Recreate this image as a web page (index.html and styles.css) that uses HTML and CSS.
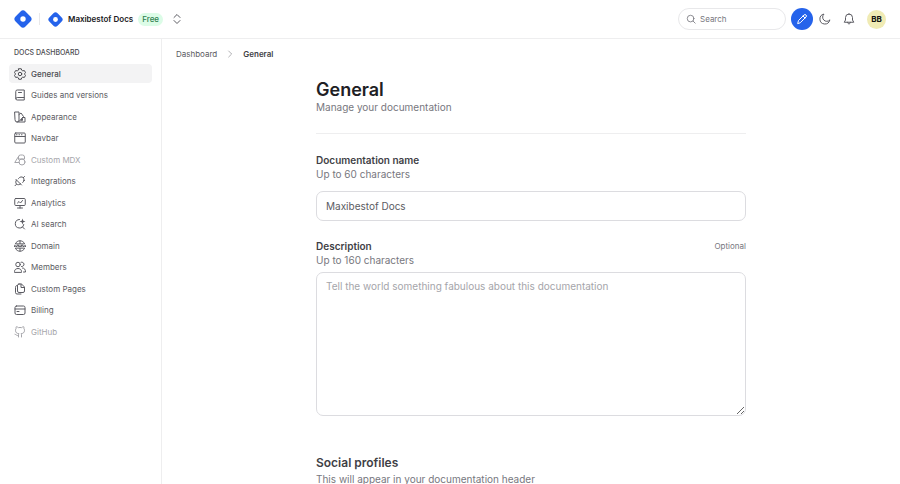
FILE: index.html
```html
<!DOCTYPE html>
<html lang="en">
<head>
<meta charset="utf-8">
<meta name="viewport" content="width=device-width, initial-scale=1">
<title>General</title>
<link rel="stylesheet" href="styles.css">
</head>
<body>
<header class="topbar">
  <a class="brand" href="#" aria-label="Home"><svg class="logo" viewBox="0 0 18 18"><rect x="2" y="2" width="14" height="14" rx="3.500" transform="rotate(45 9 9)"/><circle cx="9" cy="9" r="2.700"/></svg></a>
  <span class="divider"></span>
  <button class="project" type="button">
    <svg class="logo logo-small" viewBox="0 0 18 18"><rect x="2" y="2" width="14" height="14" rx="3.500" transform="rotate(45 9 9)"/><circle cx="9" cy="9" r="2.900"/></svg>
    <span class="project-name">Maxibestof Docs</span>
    <span class="badge">Free</span>
    <svg class="icon" viewBox="0 0 24 24"><path d="m6 9 6-6 6 6M6 15l6 6 6-6"/></svg>
  </button>
  <div class="tools">
    <label class="search">
      <svg class="icon-small" viewBox="0 0 24 24"><circle cx="11" cy="11" r="8"/><path d="m17 17 5 5"/></svg>
      <input type="search" placeholder="Search" aria-label="Search">
    </label>
    <button class="round edit" type="button" aria-label="Edit"><svg class="icon" viewBox="0 0 24 24"><path d="M3.500 20.500 5 15 16 4a2.800 2.800 0 0 1 4 4L9 19zM14 6l4 4"/></svg></button>
    <button class="round" type="button" aria-label="Dark mode"><svg class="icon" viewBox="0 0 24 24"><path d="M21.500 14.500A10 10 0 1 1 10 2.200a8 8 0 0 0 11.500 12.300z"/></svg></button>
    <button class="round" type="button" aria-label="Notifications"><svg class="icon" viewBox="0 0 24 24"><path d="M12 2a7 7 0 0 0-7 7v5l-2.500 4.500h19L19 14V9a7 7 0 0 0-7-7zM9 18.500c0 4.500 6 4.500 6 0"/></svg></button>
    <button class="avatar" type="button">BB</button>
  </div>
</header>
<div class="shell">
  <nav class="sidebar" aria-label="Docs dashboard">
    <h2 class="sidebar-title">DOCS DASHBOARD</h2>
    <ul class="menu">
      <li><a class="item current" href="#"><svg class="icon" viewBox="0 0 24 24"><path d="M9.500 1.500h5l1 3 2 1.200 3.200-.6 2.400 4.200-2.100 2.400v.6l2.100 2.400-2.400 4.200-3.200-.6-2 1.200-1 3h-5l-1-3-2-1.200-3.200.6L.9 14.700 3 12.300v-.6L.9 9.300l2.400-4.200 3.200.6 2-1.200z"/><circle cx="12" cy="12" r="3.500"/></svg>General</a></li>
      <li><a class="item" href="#"><svg class="icon" viewBox="0 0 24 24"><path d="M20.500 17V2H6.500a3 3 0 0 0-3 3v14a3 3 0 0 0 3 3h14v-5h-14a3 3 0 0 0-3 2.500M9 7h6"/></svg>Guides and versions</a></li>
      <li><a class="item" href="#"><svg class="icon" viewBox="0 0 24 24"><path d="M2 2h8v16a4 4 0 0 1-8 0zM10 7l4-3 5 7-9 10M17 13h5v9H6M14 18l3-3v3z"/></svg>Appearance</a></li>
      <li><a class="item" href="#"><svg class="icon" viewBox="0 0 24 24"><rect x="1.500" y="2" width="21" height="20" rx="2"/><path d="M2 9h20M5 5.500h1M10 5.500h1M15 5.500h1"/></svg>Navbar</a></li>
      <li><a class="item muted" href="#"><svg class="icon" viewBox="0 0 24 24"><path d="M9 5 1.500 17H10M9 10V6a4 4 0 0 1 4-4h4a4 4 0 0 1 4 4v4H9z"/><circle cx="16" cy="16" r="6"/></svg>Custom MDX</a></li>
      <li><a class="item" href="#"><svg class="icon" viewBox="0 0 24 24"><path d="M5 10c-2 3-2 6 0 8s6 2 8.500-.5M5 18.500l-3 3M4 9l11 11M9 7c3-4 7-4 9.500-1.500s2 6.500-1 9.500M18.500 5.500 21 3M19 12l2-1"/></svg>Integrations</a></li>
      <li><a class="item" href="#"><svg class="icon" viewBox="0 0 24 24"><rect x="1.500" y="3" width="21" height="14" rx="2"/><path d="M7 22h10M12 17v5M7 12l3-3 3 3 4-5"/></svg>Analytics</a></li>
      <li><a class="item" href="#"><svg class="icon" viewBox="0 0 24 24"><path d="M11 3a8.500 8.500 0 1 0 8.500 10M17 18l4 4"/><path class="solid" d="m17 1 1.600 4.400L23 7l-4.400 1.600L17 13l-1.600-4.400L11 7l4.400-1.600z"/></svg>AI search</a></li>
      <li><a class="item" href="#"><svg class="icon" viewBox="0 0 24 24"><path d="M3 7c3-7.500 15-7.500 18 0zM3 17c3 7.500 15 7.500 18 0zM12 2v5M12 17v5"/><path d="m0 10 1.500 4L3.500 11l2 3L7 10M8.500 10l1.500 4 2-3 2 3 1.500-4M17 10l1.500 4 2-3 2 3 1.500-4"/></svg>Domain</a></li>
      <li><a class="item" href="#"><svg class="icon" viewBox="0 0 24 24"><circle cx="8" cy="7" r="4.500"/><path d="M1 22v-1c0-8 14-8 14 0v1zM14 2.500a4.500 4.500 0 1 1 1 8.700M17 14c4 0 6 3 6 8h-4"/></svg>Members</a></li>
      <li><a class="item" href="#"><svg class="icon" viewBox="0 0 24 24"><path d="M10 2h5l6 6v8a3 3 0 0 1-3 3h-8a3 3 0 0 1-3-3V5a3 3 0 0 1 3-3zM14 2v7h7M7 5c-3 0-4 1-4 4v10a3 3 0 0 0 3 3h8"/></svg>Custom Pages</a></li>
      <li><a class="item" href="#"><svg class="icon" viewBox="0 0 24 24"><rect x="2" y="4" width="20" height="17" rx="3"/><path d="M2 10h20M6 15h4"/></svg>Billing</a></li>
      <li><a class="item muted" href="#"><svg class="icon" viewBox="0 0 24 24"><path d="M9 22v-4c0-1 .3-2 1-2.500-4-.5-7-2-7-7 0-1.500.5-3 1.300-4C4 3.500 4 2.500 4.500 1.500c2 0 3.500 1 4.500 1.800 2-.5 4-.5 6 0 1-.8 2.500-1.800 4.500-1.800.5 1 .5 2 .2 3 .8 1 1.300 2.500 1.300 4 0 5-3 6.500-7 7 .7.500 1 1.500 1 2.500v4M9 19c-4 1-4-2-7-2.500"/></svg>GitHub</a></li>
    </ul>
  </nav>
  <main class="main">
    <nav class="crumbs" aria-label="Breadcrumb">
      <a href="#">Dashboard</a>
      <svg class="chevron" viewBox="0 0 24 24"><path d="m8 3 9 9-9 9"/></svg>
      <a class="here" href="#">General</a>
    </nav>
    <form class="form">
      <header class="heading">
        <h1>General</h1>
        <p class="hint">Manage your documentation</p>
      </header>
      <div class="field">
        <label for="name">Documentation name</label>
        <p class="hint">Up to 60 characters</p>
        <input class="control" id="name" type="text" value="Maxibestof Docs">
      </div>
      <div class="field">
        <div class="label-row"><label for="description">Description</label><span class="optional">Optional</span></div>
        <p class="hint">Up to 160 characters</p>
        <textarea class="control area" id="description" placeholder="Tell the world something fabulous about this documentation"></textarea>
      </div>
      <section class="social">
        <h2>Social profiles</h2>
        <p class="hint">This will appear in your documentation header</p>
      </section>
    </form>
  </main>
</div>
</body>
</html>
```
FILE: styles.css
```css
* {
  box-sizing: border-box;
}

body {
  margin: 0;
  height: 100vh;
  display: flex;
  flex-direction: column;
  background: #fff;
  color: #5b5b62;
  font: 8px/14px Inter, "Liberation Sans", sans-serif;
}

h1, h2, p, ul {
  margin: 0;
  padding: 0;
}

a {
  color: inherit;
  text-decoration: none;
}

button, input, textarea {
  font: inherit;
  color: inherit;
}

button {
  padding: 0;
  border: 0;
  background: none;
}

svg {
  display: block;
  flex: none;
  fill: none;
  stroke: currentColor;
  stroke-width: 2;
  stroke-linecap: round;
  stroke-linejoin: round;
}

.icon {
  width: 12px;
  height: 12px;
}

.icon-small {
  width: 10px;
  height: 10px;
}

.menu .icon {
  width: 12px;
  height: 12px;
}

.solid {
  fill: currentColor;
  stroke: none;
}

.topbar {
  display: flex;
  align-items: center;
  flex: none;
  height: 39px;
  padding: 0 14px;
  border-bottom: 1px solid #eeeeef;
}

.logo {
  width: 18px;
  height: 18px;
  stroke: none;
  fill: #2563eb;
}

.logo circle {
  fill: #fff;
}

.logo-small {
  width: 15px;
  height: 15px;
}

.divider {
  width: 1px;
  height: 12px;
  margin: 0 8px 0 7px;
  background: #e8e8ea;
}

.project {
  display: flex;
  align-items: center;
  gap: 5px;
}

.project-name {
  color: #202024;
  font-weight: 600;
}

.badge {
  padding: 0 4px;
  border-radius: 7px;
  background: #dcfce7;
  color: #2f8050;
  font-weight: 500;
  line-height: 13px;
}

.project > .icon {
  margin-left: 3px;
}

.tools {
  display: flex;
  align-items: center;
  margin-left: auto;
}

.search {
  display: flex;
  align-items: center;
  gap: 4px;
  width: 108px;
  height: 22px;
  margin-right: 5px;
  padding: 0 7px;
  border: 1px solid #e8e8ea;
  border-radius: 11px;
  color: #77777e;
}

.search input {
  min-width: 0;
  width: 100%;
  padding: 0;
  border: 0;
  outline: 0;
  background: none;
}

.search input::placeholder {
  color: #77777e;
}

.round {
  display: grid;
  place-items: center;
  width: 24px;
  height: 22px;
}

.edit {
  width: 22px;
  border-radius: 50%;
  background: #2563eb;
  color: #fff;
}

.avatar {
  width: 19px;
  height: 19px;
  margin-left: 6px;
  border-radius: 50%;
  background: #f0ebb4;
  color: #111;
  font-weight: 700;
}

.shell {
  display: flex;
  flex: 1;
  min-height: 0;
}

.sidebar {
  flex: none;
  width: 162px;
  padding: 7px 9px;
  border-right: 1px solid #eeeeef;
}

.sidebar-title {
  padding-left: 5px;
  margin-bottom: 4px;
  color: #4b4b51;
  font-size: 7px;
  font-weight: 500;
}

.menu {
  display: flex;
  flex-direction: column;
  justify-content: space-between;
  height: 277px;
  list-style: none;
}

.item {
  display: flex;
  align-items: center;
  gap: 5px;
  height: 19px;
  padding: 0 5px;
  border-radius: 4px;
}

.current {
  background: #f3f3f4;
  color: #4b4b51;
  font-weight: 500;
}

.muted {
  color: #a5a5aa;
}

.main {
  flex: 1;
  min-width: 0;
  padding: 8px 14px;
  overflow-y: auto;
  scrollbar-width: none;
}

.crumbs {
  display: flex;
  align-items: center;
  gap: 9px;
}

.chevron {
  width: 8px;
  height: 8px;
  color: #8a8a90;
}

.here {
  color: #3f3f46;
  font-weight: 600;
}

.form {
  max-width: 430px;
  margin: 19px auto 0;
  font-size: 10px;
}

.heading {
  padding-bottom: 19px;
  margin-bottom: 19px;
  border-bottom: 1px solid #eeeeef;
}

h1 {
  color: #202024;
  font-size: 18px;
  line-height: 20px;
  font-weight: 600;
}

.hint {
  color: #77777e;
}

.field {
  margin-bottom: 18px;
}

.field label {
  display: block;
  color: #3f3f46;
  font-weight: 600;
}

.label-row {
  display: flex;
  justify-content: space-between;
}

.optional {
  color: #77777e;
  font-size: 8px;
}

.control {
  display: block;
  width: 100%;
  height: 30px;
  margin-top: 10px;
  padding: 6px 9px;
  border: 1px solid #dcdce0;
  border-radius: 7px;
  background: #fff;
}

.area {
  height: 144px;
  margin-top: 5px;
}

.area::placeholder {
  color: #a5a5aa;
}

.social {
  margin-top: 38px;
}

.social h2 {
  color: #3f3f46;
  font-size: 12px;
  line-height: 18px;
  font-weight: 600;
}
```
